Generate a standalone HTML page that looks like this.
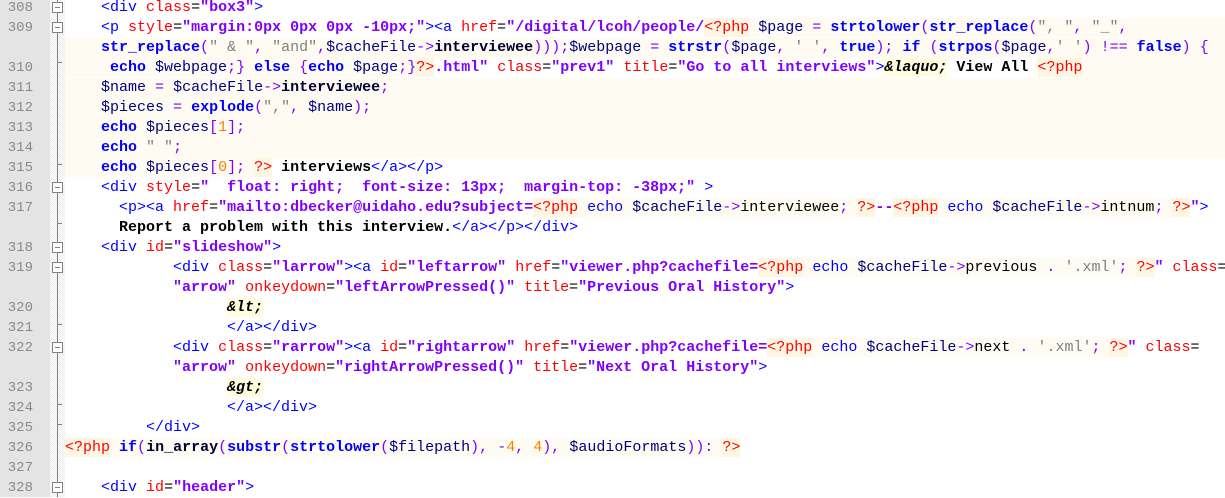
<!DOCTYPE html>
<html><head><meta charset="utf-8"><style>
html,body{margin:0;padding:0;width:1225px;height:497px;overflow:hidden;background:#fff}
#g{position:absolute;left:0;top:0;width:50px;height:497px;background:#e4e4e4}
#fm{position:absolute;left:50px;top:0;width:15px;height:497px;background-color:#f4f4f4;background-image:repeating-conic-gradient(#ffffff 0 25%,#ececec 0 50%);background-size:2px 2px}
#fl{position:absolute;left:57px;top:0;width:1px;height:497px;background:#808080}
#w{position:absolute;left:0;top:1px;width:1225px;height:497px}
.ln{position:absolute;left:0;width:33px;text-align:right;font:14px/20px "Liberation Mono",monospace;color:#8a8a8a}
.bx{position:absolute;left:52px;width:9px;height:9px;border:1px solid #808080;background:#fff}
.bx:after{content:"";position:absolute;left:2px;top:4px;width:5px;height:1px;background:#808080}
.tk{position:absolute;left:57px;width:5px;height:1px;background:#808080}
.r{position:absolute;left:65px;width:1160px;height:20px;overflow:hidden;white-space:pre;font:15px/20px "Liberation Mono",monospace;color:#000}
.r span{padding:1px 0}
.t{color:#0000ff}.a{color:#ff0000}.v{color:#8000ff;font-weight:bold}
.e{font-style:italic;background:#fefde0;font-weight:bold}.x{font-weight:bold}
.pd{color:#ff0000;background:#fdf6e3}.p{background:#fefbf2}
.k{color:#0000ff;font-weight:bold}.kn{color:#0000ff}
.vr{color:#000080}.o{color:#8000ff}.s{color:#808080}.n{color:#ff8000}.w{font-weight:bold;color:#000033}
.r span.eol{display:inline-block;vertical-align:top;padding:0;width:2000px;height:20px;background:#fefbf2}
</style></head><body>
<div id="g"></div><div id="fm"></div><div id="fl"></div>
<div id="w">
<div class="ln" style="top:-3px">308</div>
<div class="ln" style="top:17px">309</div>
<div class="ln" style="top:57px">310</div>
<div class="ln" style="top:77px">311</div>
<div class="ln" style="top:97px">312</div>
<div class="ln" style="top:117px">313</div>
<div class="ln" style="top:137px">314</div>
<div class="ln" style="top:157px">315</div>
<div class="ln" style="top:177px">316</div>
<div class="ln" style="top:197px">317</div>
<div class="ln" style="top:237px">318</div>
<div class="ln" style="top:257px">319</div>
<div class="ln" style="top:297px">320</div>
<div class="ln" style="top:317px">321</div>
<div class="ln" style="top:337px">322</div>
<div class="ln" style="top:377px">323</div>
<div class="ln" style="top:397px">324</div>
<div class="ln" style="top:417px">325</div>
<div class="ln" style="top:437px">326</div>
<div class="ln" style="top:457px">327</div>
<div class="ln" style="top:477px">328</div>
<div class="bx" style="top:1px"></div>
<div class="bx" style="top:21px"></div>
<div class="bx" style="top:181px"></div>
<div class="bx" style="top:241px"></div>
<div class="bx" style="top:261px"></div>
<div class="bx" style="top:341px"></div>
<div class="bx" style="top:481px"></div>
<div class="tk" style="top:61px"></div>
<div class="tk" style="top:163px"></div>
<div class="tk" style="top:222px"></div>
<div class="tk" style="top:323px"></div>
<div class="tk" style="top:403px"></div>
<div class="tk" style="top:423px"></div>

<div class="r" style="top:-3px">    <span class="t">&lt;div</span> <span class="a">class</span>=<span class="v">"box3"</span><span class="t">&gt;</span></div>
<div class="r" style="top:17px">    <span class="t">&lt;p</span> <span class="a">style</span>=<span class="v">"margin:0px 0px 0px -10px;"</span><span class="t">&gt;&lt;a</span> <span class="a">href</span>=<span class="v">"/digital/lcoh/people/</span><span class="pd">&lt;?php</span><span class="p"> <span class="vr">$page</span> <span class="o">=</span> <span class="k">strtolower</span><span class="o">(</span><span class="k">str_replace</span><span class="o">(</span><span class="s">", "</span><span class="o">,</span> <span class="s">"_"</span><span class="o">,</span></span><span class="eol"></span></div>
<div class="r" style="top:37px;background:#fefbf2">    <span class="k">str_replace</span><span class="o">(</span><span class="s">" &amp; "</span><span class="o">,</span> <span class="s">"and"</span><span class="o">,</span><span class="vr">$cacheFile</span><span class="o">-&gt;</span><span class="w">interviewee</span><span class="o">)));</span><span class="vr">$webpage</span> <span class="o">=</span> <span class="k">strstr</span><span class="o">(</span><span class="vr">$page</span><span class="o">,</span> <span class="s">' '</span><span class="o">,</span> <span class="k">true</span><span class="o">);</span> <span class="k">if</span> <span class="o">(</span><span class="k">strpos</span><span class="o">(</span><span class="vr">$page</span><span class="o">,</span><span class="s">' '</span><span class="o">)</span> <span class="o">!==</span> <span class="k">false</span><span class="o">)</span> <span class="o">{</span></div>
<div class="r" style="top:57px"><span class="p">     <span class="k">echo</span> <span class="vr">$webpage</span><span class="o">;}</span> <span class="k">else</span> <span class="o">{</span><span class="k">echo</span> <span class="vr">$page</span><span class="o">;}</span></span><span class="pd">?&gt;</span><span class="v">.html"</span> <span class="a">class</span>=<span class="v">"prev1"</span> <span class="a">title</span>=<span class="v">"Go to all interviews"</span><span class="t">&gt;</span><span class="e">&amp;laquo;</span><span class="x"> View All </span><span class="pd">&lt;?php</span><span class="eol"></span></div>
<div class="r" style="top:77px;background:#fefbf2">    <span class="vr">$name</span> <span class="o">=</span> <span class="vr">$cacheFile</span><span class="o">-&gt;</span><span class="w">interviewee</span><span class="o">;</span></div>
<div class="r" style="top:97px;background:#fefbf2">    <span class="vr">$pieces</span> <span class="o">=</span> <span class="k">explode</span><span class="o">(</span><span class="s">","</span><span class="o">,</span> <span class="vr">$name</span><span class="o">);</span></div>
<div class="r" style="top:117px;background:#fefbf2">    <span class="k">echo</span> <span class="vr">$pieces</span><span class="o">[</span><span class="n">1</span><span class="o">];</span></div>
<div class="r" style="top:137px;background:#fefbf2">    <span class="k">echo</span> <span class="s">" "</span><span class="o">;</span></div>
<div class="r" style="top:157px"><span class="p">    <span class="k">echo</span> <span class="vr">$pieces</span><span class="o">[</span><span class="n">0</span><span class="o">];</span> </span><span class="pd">?&gt;</span><span class="x"> interviews</span><span class="t">&lt;/a&gt;&lt;/p&gt;</span></div>
<div class="r" style="top:177px">    <span class="t">&lt;div</span> <span class="a">style</span>=<span class="v">"  float: right;  font-size: 13px;  margin-top: -38px;"</span> <span class="t">&gt;</span></div>
<div class="r" style="top:197px">      <span class="t">&lt;p&gt;&lt;a</span> <span class="a">href</span>=<span class="v">"mailto:dbecker@uidaho.edu?subject=</span><span class="pd">&lt;?php</span><span class="p"> <span class="kn">echo</span> <span class="vr">$cacheFile</span><span class="o">-&gt;</span>interviewee<span class="o">;</span> </span><span class="pd">?&gt;</span><span class="v">--</span><span class="pd">&lt;?php</span><span class="p"> <span class="kn">echo</span> <span class="vr">$cacheFile</span><span class="o">-&gt;</span>intnum<span class="o">;</span> </span><span class="pd">?&gt;</span><span class="v">"</span><span class="t">&gt;</span></div>
<div class="r" style="top:217px">      <span class="x">Report a problem with this interview.</span><span class="t">&lt;/a&gt;&lt;/p&gt;&lt;/div&gt;</span></div>
<div class="r" style="top:237px">    <span class="t">&lt;div</span> <span class="a">id</span>=<span class="v">"slideshow"</span><span class="t">&gt;</span></div>
<div class="r" style="top:257px">            <span class="t">&lt;div</span> <span class="a">class</span>=<span class="v">"larrow"</span><span class="t">&gt;&lt;a</span> <span class="a">id</span>=<span class="v">"leftarrow"</span> <span class="a">href</span>=<span class="v">"viewer.php?cachefile=</span><span class="pd">&lt;?php</span><span class="p"> <span class="kn">echo</span> <span class="vr">$cacheFile</span><span class="o">-&gt;</span>previous <span class="o">.</span> <span class="s">'.xml'</span><span class="o">;</span> </span><span class="pd">?&gt;</span><span class="v">"</span> <span class="a">class</span>=</div>
<div class="r" style="top:277px">            <span class="v">"arrow"</span> <span class="a">onkeydown</span>=<span class="v">"leftArrowPressed()"</span> <span class="a">title</span>=<span class="v">"Previous Oral History"</span><span class="t">&gt;</span></div>
<div class="r" style="top:297px">                  <span class="e">&amp;lt;</span></div>
<div class="r" style="top:317px">                  <span class="t">&lt;/a&gt;&lt;/div&gt;</span></div>
<div class="r" style="top:337px">            <span class="t">&lt;div</span> <span class="a">class</span>=<span class="v">"rarrow"</span><span class="t">&gt;&lt;a</span> <span class="a">id</span>=<span class="v">"rightarrow"</span> <span class="a">href</span>=<span class="v">"viewer.php?cachefile=</span><span class="pd">&lt;?php</span><span class="p"> <span class="kn">echo</span> <span class="vr">$cacheFile</span><span class="o">-&gt;</span>next <span class="o">.</span> <span class="s">'.xml'</span><span class="o">;</span> </span><span class="pd">?&gt;</span><span class="v">"</span> <span class="a">class</span>=</div>
<div class="r" style="top:357px">            <span class="v">"arrow"</span> <span class="a">onkeydown</span>=<span class="v">"rightArrowPressed()"</span> <span class="a">title</span>=<span class="v">"Next Oral History"</span><span class="t">&gt;</span></div>
<div class="r" style="top:377px">                  <span class="e">&amp;gt;</span></div>
<div class="r" style="top:397px">                  <span class="t">&lt;/a&gt;&lt;/div&gt;</span></div>
<div class="r" style="top:417px">         <span class="t">&lt;/div&gt;</span></div>
<div class="r" style="top:437px"><span class="pd">&lt;?php</span><span class="p"> <span class="k">if</span><span class="o">(</span><span class="w">in_array</span><span class="o">(</span><span class="k">substr</span><span class="o">(</span><span class="k">strtolower</span><span class="o">(</span><span class="vr">$filepath</span><span class="o">),</span> <span class="o">-</span><span class="n">4</span><span class="o">,</span> <span class="n">4</span><span class="o">),</span> <span class="vr">$audioFormats</span><span class="o">)):</span> </span><span class="pd">?&gt;</span></div>
<div class="r" style="top:457px"></div>
<div class="r" style="top:477px">    <span class="t">&lt;div</span> <span class="a">id</span>=<span class="v">"header"</span><span class="t">&gt;</span></div>
</div>
</body></html>
